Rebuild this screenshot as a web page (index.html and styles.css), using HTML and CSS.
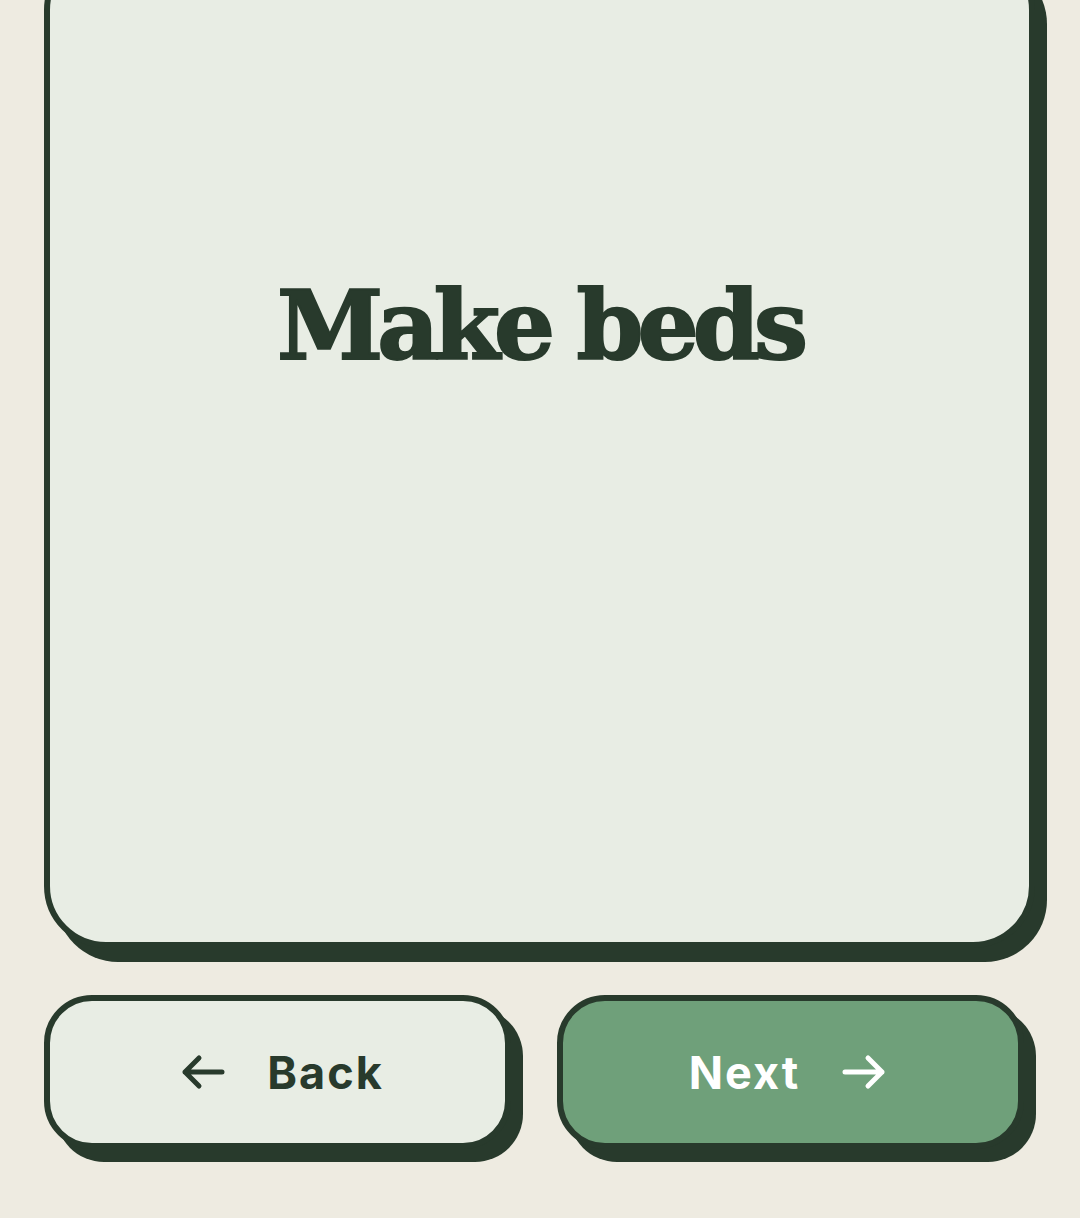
FILE: index.html
```html
<!DOCTYPE html>
<html lang="en">
<head>
  <meta charset="UTF-8" />
  <meta name="viewport" content="width=device-width, initial-scale=1.0"/>
  <title>Chores</title>
  <link rel="stylesheet" href="styles.css">
</head>
<body>
  <div class="screen">
    <div class="card">
      <h1 class="task">Make beds</h1>
    </div>
    <div class="nav">
      <button class="btn back">
        <svg class="arrow" viewBox="0 0 44 36" width="44" height="36">
          <path d="M41 18H4M18 4L4 18l14 14" />
        </svg>
        <span>Back</span>
      </button>
      <button class="btn next">
        <span>Next</span>
        <svg class="arrow" viewBox="0 0 44 36" width="44" height="36">
          <path d="M3 18h37M26 4l14 14-14 14" />
        </svg>
      </button>
    </div>
  </div>
</body>
</html>
```

FILE: styles.css
```css
body {
  margin: 0;
  background-color: #eeebe1;
  font-family: Inter, "Noto Sans", sans-serif;
  color: #283a2c;
}
.screen {
  width: 991px;
  padding: 1px 0 80px 44px;
}
.card {
  box-sizing: border-box;
  height: 1000px;
  margin-top: -53px;
  background-color: #e8ede4;
  border: 6px solid #283a2c;
  border-radius: 62px;
  box-shadow: 12px 14px 0 #283a2c;
  text-align: center;
}
.task {
  margin: 0;
  padding-top: 324px;
  font-family: "DejaVu Serif", "Liberation Serif", serif;
  font-weight: bold;
  font-size: 96px;
  letter-spacing: -6px;
  -webkit-text-stroke: 2px #283a2c;
  line-height: 1;
}
.nav {
  display: flex;
  gap: 46px;
  margin-top: 47px;
}
.btn {
  flex: none;
  width: 467px;
  box-sizing: border-box;
  height: 154px;
  border: 6px solid #283a2c;
  border-radius: 48px;
  box-shadow: 12px 13px 0 #283a2c;
  display: flex;
  align-items: center;
  justify-content: center;
  gap: 42px;
  font-family: Inter, "Noto Sans", sans-serif;
  font-weight: 700;
  font-size: 45px;
  letter-spacing: 2px;
  cursor: pointer;
  padding: 0;
}
.back {
  background-color: #e8ede4;
  color: #283a2c;
  padding-left: 10px;
}
.next {
  background-color: #6fa07a;
  color: #ffffff;
  padding-right: 6px;
}
.arrow {
  fill: none;
  stroke: currentColor;
  stroke-width: 5;
  stroke-linecap: round;
  stroke-linejoin: round;
}
```
